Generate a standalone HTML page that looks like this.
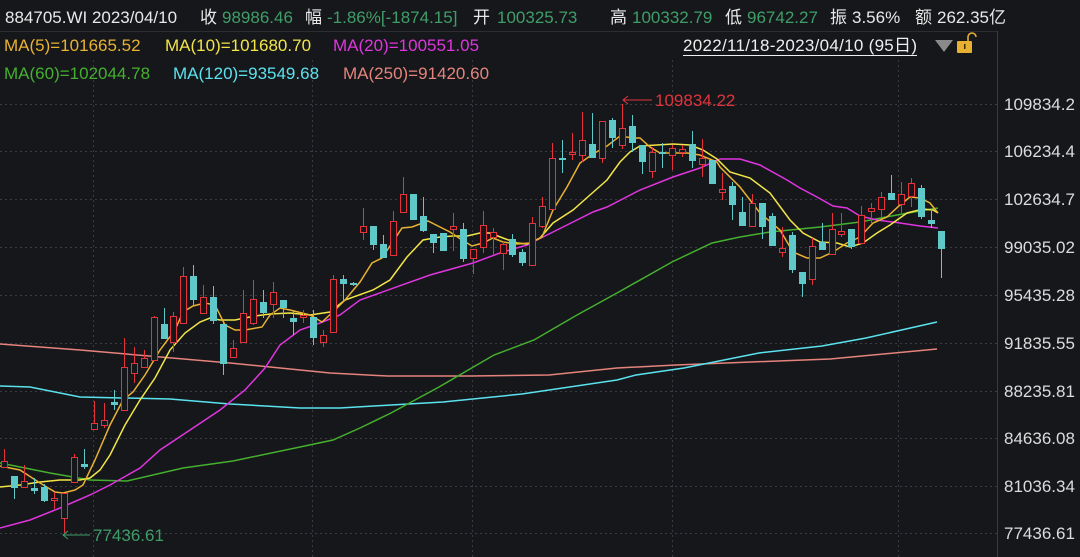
<!DOCTYPE html>
<html><head><meta charset="utf-8"><style>
html,body{margin:0;padding:0;background:#16171b;width:1080px;height:557px;overflow:hidden}
svg{display:block}
text{font-family:"Liberation Sans","Noto Sans CJK SC",sans-serif}
</style></head><body>
<svg id="s" width="1080" height="557" xmlns="http://www.w3.org/2000/svg">
<rect width="1080" height="557" fill="#16171b"/>
<line x1="0" y1="31.5" x2="997" y2="31.5" stroke="#2c2d33"/>
<line x1="997.5" y1="31" x2="997.5" y2="557" stroke="#3a3b40"/>
<g id="grid" stroke="#3a3b42" stroke-dasharray="2,3"></g>
<g font-size="17" fill="#e8e8e8">
<text x="5" y="23">884705.WI 2023/04/10</text>
<text x="200" y="23">收</text><text x="222" y="23" fill="#3f9e68">98986.46</text>
<text x="305" y="23">幅</text><text x="327" y="23" fill="#3f9e68">-1.86%[-1874.15]</text>
<text x="473" y="23">开</text><text x="497" y="23" fill="#3f9e68">100325.73</text>
<text x="610" y="23">高</text><text x="632" y="23" fill="#3f9e68">100332.79</text>
<text x="725" y="23">低</text><text x="747" y="23" fill="#3f9e68">96742.27</text>
<text x="830" y="23">振</text><text x="852" y="23">3.56%</text>
<text x="915" y="23">额</text><text x="937" y="23">262.35亿</text>
</g>
<g font-size="17">
<text x="4" y="51" fill="#e8b232">MA(5)=101665.52</text>
<text x="165" y="51" fill="#f2e548">MA(10)=101680.70</text>
<text x="333" y="51" fill="#df35df">MA(20)=100551.05</text>
<text x="4" y="79" fill="#45b02e">MA(60)=102044.78</text>
<text x="173" y="79" fill="#5ae3ef">MA(120)=93549.68</text>
<text x="343" y="79" fill="#e5847c">MA(250)=91420.60</text>
<text x="683" y="51" fill="#eee" font-size="17" textLength="234">2022/11/18-2023/04/10 (95日)</text>
</g>
<line x1="683" y1="55.5" x2="917" y2="55.5" stroke="#eee"/>
<polygon points="935,40 953,40 944,52" fill="#8a8a8a"/>
<rect x="957" y="41" width="15" height="12" fill="#e8b030" rx="1"/>
<path d="M968 41 V37 a4 4 0 0 1 8 0" fill="none" stroke="#e8b030" stroke-width="1.6"/>
<rect x="964" y="44" width="1.5" height="5" fill="#3a2a00"/>
<g id="ma" fill="none" stroke-width="1.5"></g>
<g id="cd"></g>
<g font-size="17" fill="#dcdcdc" id="ax"></g>
<line x1="623" y1="100" x2="652" y2="100" stroke="#e0343c"/>
<path d="M628 96 L623 100 L628 104" fill="none" stroke="#e0343c"/>
<text x="655" y="106" fill="#e0343c" font-size="17">109834.22</text>
<line x1="63" y1="535" x2="90" y2="535" stroke="#3f9e68"/>
<path d="M68 531 L63 535 L68 539" fill="none" stroke="#3f9e68"/>
<text x="93" y="541" fill="#3f9e68" font-size="17">77436.61</text>
</svg>
<script>
var NS="http://www.w3.org/2000/svg";
function el(p,t,a){var e=document.createElementNS(NS,t);for(var k in a)e.setAttribute(k,a[k]);p.appendChild(e);return e;}
var g=document.getElementById('grid');
var ys=[104,151,199,247,295,343,391,438,486,533];
ys.forEach(function(y){el(g,'line',{x1:0,x2:997,y1:y+.5,y2:y+.5});});
[93,312,472,672,898].forEach(function(x){el(g,'line',{x1:x+.5,x2:x+.5,y1:60,y2:557});});
var labs=["109834.2","106234.4","102634.7","99035.02","95435.28","91835.55","88235.81","84636.08","81036.34","77436.61"];
var ax=document.getElementById('ax');
ys.forEach(function(y,i){var t=el(ax,'text',{x:1004,y:y+6});t.textContent=labs[i];});
var ma=document.getElementById('ma');
function pl(c,pts){el(ma,'polyline',{stroke:c,points:pts.map(function(p){return p.join(',')}).join(' ')});}
pl('#e5847c',[[0,344],[80,350],[230,363],[330,373],[387,376],[470,376],[549,375],[617,368],[676,365],[751,362],[830,359],[937,349]]);
pl('#5ae3ef',[[0,386],[30,387],[80,397],[170,399],[230,404],[300,408],[340,408],[391,405],[443,402],[522,394],[617,380],[636,375],[684,368],[759,353],[822,346],[866,338],[937,322]]);
pl('#45b02e',[[0,463],[50,473],[90,480],[127,481],[183,468],[233,461],[300,447],[333,440],[360,428],[391,413],[439,387],[494,355],[534,340],[577,315],[617,293],[672,262],[712,243],[740,237],[770,232],[820,227],[860,222],[897,215],[920,211],[938,208]]);
pl('#df35df',[[0,528],[30,520],[60,508],[90,495],[110,485],[140,468],[160,450],[190,430],[220,410],[245,390],[265,368],[280,345],[300,330],[320,323],[340,315],[360,300],[430,275],[473,263],[500,253],[527,245],[543,237],[557,230],[573,222],[593,212],[607,207],[640,190],[673,177],[700,168],[720,159],[740,159],[760,165],[787,180],[800,188],[817,197],[833,206],[847,208],[860,216],[877,220],[900,223],[920,226],[938,228]]);
pl('#f2e548',[[0,487],[20,485],[40,482],[60,480],[80,480],[90,478],[100,470],[110,455],[125,425],[140,400],[155,378],[170,350],[185,333],[200,322],[210,318],[220,320],[235,320],[255,316],[270,314],[290,313],[310,315],[330,312],[345,300],[373,290],[390,280],[407,257],[423,240],[440,237],[453,236],[467,236],[480,233],[490,233],[503,238],[517,243],[527,244],[540,238],[553,223],[573,210],[590,195],[607,180],[620,162],[630,152],[640,146],[657,145],[673,144],[690,145],[703,150],[717,159],[730,172],[750,178],[770,193],[790,220],[803,233],[820,242],[837,243],[850,247],[863,243],[877,233],[890,225],[907,213],[923,209],[933,210],[938,213]]);
pl('#e8b232',[[0,466],[20,470],[40,483],[55,492],[63,493],[75,490],[83,485],[95,460],[110,425],[123,400],[133,392],[145,375],[160,350],[175,330],[183,312],[193,306],[205,303],[215,305],[225,325],[235,330],[245,330],[262,327],[270,315],[280,308],[290,310],[310,315],[322,322],[335,310],[345,300],[360,282],[372,263],[382,258],[402,228],[412,227],[428,221],[440,227],[450,232],[462,240],[472,246],[483,243],[493,238],[503,242],[517,244],[530,243],[542,237],[553,210],[567,187],[580,163],[593,154],[607,146],[620,136],[633,138],[640,138],[650,147],[660,153],[673,153],[687,153],[700,155],[717,162],[720,167],[740,187],[760,213],[780,230],[793,252],[807,258],[820,258],[833,252],[847,243],[860,237],[873,223],[887,217],[900,205],[910,197],[920,198],[930,203],[938,213]]);
var D=[
[1,461,467,449,468],[0,476,488,476,499],[1,481,487,465,487],[0,488,491,478,494],[0,487,501,484,502],[1,498,500,492,509],[1,493,518,493,533],[1,457,482,454,482],[0,464,467,449,469],[1,423,429,401,429],
[1,420,425,403,428],[0,402,405,390,410],[1,367,410,338,410],[1,363,373,347,383],[1,358,367,350,367],[1,317,360,316,360],[0,324,339,308,339],[1,316,342,312,352],[1,276,323,267,323],[0,276,300,265,305],
[1,297,313,285,313],[0,297,321,286,324],[0,324,364,322,375],[1,348,357,340,357],[1,313,342,290,343],[1,299,323,280,325],[0,302,313,290,318],[1,292,304,282,318],[0,300,308,300,318],[0,318,322,310,335],
[1,315,317,310,323],[0,317,338,310,345],[1,335,342,330,347],[1,279,332,275,332],[0,279,284,275,301],[0,283,285,282,286],[1,226,232,208,240],[0,226,245,226,250],[0,244,258,235,258],[1,221,255,211,255],
[1,194,212,177,212],[0,194,220,194,220],[0,216,231,197,232],[0,234,243,234,253],[0,233,251,233,251],[1,226,229,213,251],[0,229,259,223,262],[1,249,258,249,274],[1,225,247,211,253],[1,232,237,228,255],
[1,244,253,242,270],[0,239,255,234,257],[0,252,263,249,266],[1,223,265,217,266],[1,206,226,197,228],[1,158,209,143,209],[0,158,160,140,173],[1,152,154,133,160],[1,140,155,112,162],[0,144,158,113,158],
[1,121,158,121,163],[0,120,138,118,148],[1,128,145,104,149],[0,126,143,115,152],[0,145,162,145,174],[1,152,171,147,178],[0,152,154,143,168],[1,148,155,145,170],[1,149,152,145,157],[0,144,161,131,168],
[1,158,164,139,177],[0,160,184,160,184],[1,189,192,173,200],[0,186,205,182,220],[0,212,226,197,226],[1,203,226,194,227],[0,203,227,203,239],[0,216,246,213,246],[1,248,252,227,257],[0,235,270,232,273],
[0,272,284,272,297],[1,246,279,238,285],[0,242,250,223,250],[1,229,254,213,255],[1,231,234,213,237],[0,229,247,229,249],[1,215,243,206,243],[1,208,211,203,223],[1,197,209,192,217],[0,193,200,175,200],
[1,194,204,182,213],[1,183,196,178,207],[0,188,217,185,219],[0,220,224,209,228],[0,231,249,231,278]];
var cd=document.getElementById('cd');
D.forEach(function(d,i){var x=Math.round(4+i*9.97)+.5;var c=d[0]?'#e5333b':'#5fc9c9';
if(d[0]){el(cd,'line',{x1:x,x2:x,y1:d[3],y2:d[1],stroke:c});el(cd,'line',{x1:x,x2:x,y1:d[2],y2:d[4],stroke:c});
el(cd,'rect',{x:x-3,y:d[1]+.5,width:6,height:Math.max(d[2]-d[1],1),fill:'#16171b',stroke:c});}
else{el(cd,'line',{x1:x,x2:x,y1:d[3],y2:d[4],stroke:c});el(cd,'rect',{x:x-3.5,y:d[1],width:7,height:Math.max(d[2]-d[1],1.5),fill:c});}
});
</script>
</body></html>
